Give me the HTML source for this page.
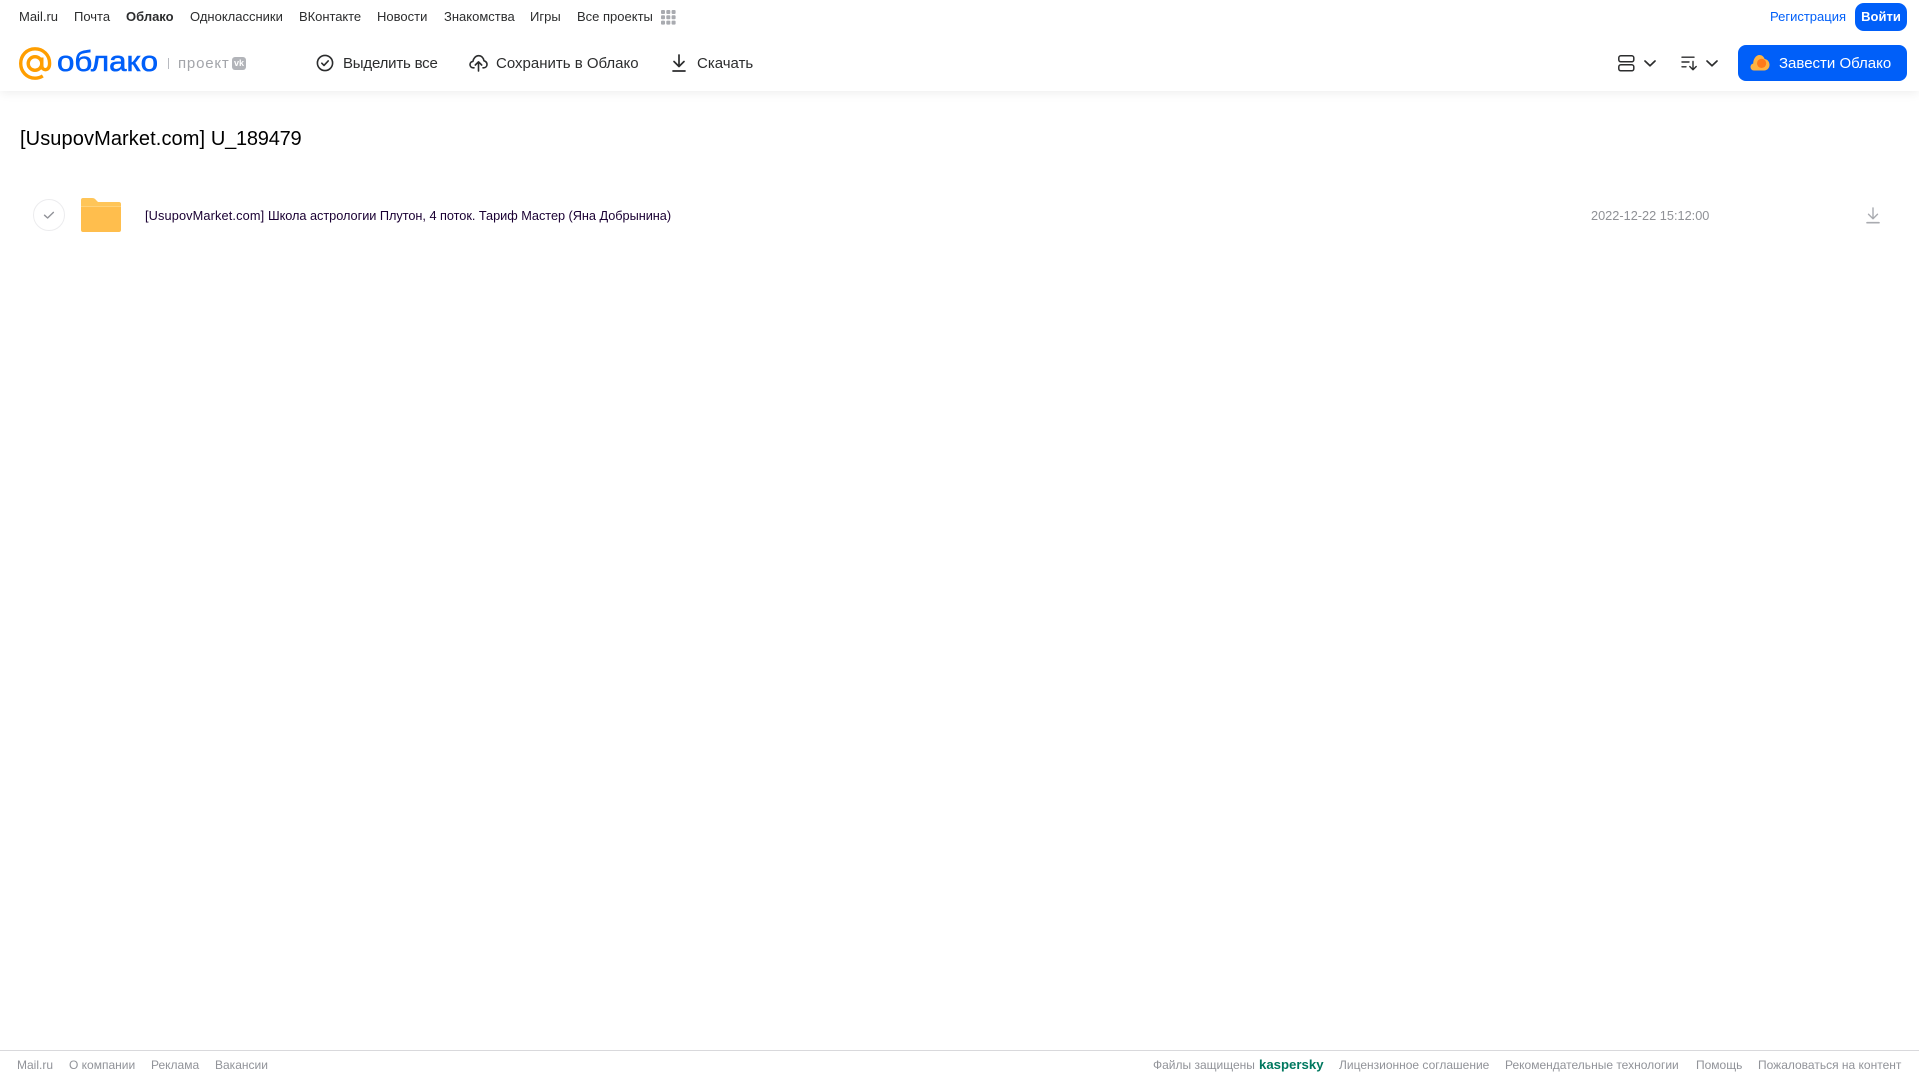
<!DOCTYPE html>
<html lang="ru">
<head>
<meta charset="utf-8">
<title>Облако</title>
<style>
html,body{margin:0;padding:0;background:#fff}
body{position:relative;width:1919px;height:1079px;overflow:hidden;font-family:"Liberation Sans","Noto Sans CJK SC",sans-serif}
a,span,div.t,h1{position:absolute;white-space:nowrap;text-decoration:none;margin:0;font-weight:400}
em{font-style:normal}
svg{position:absolute;overflow:visible}
.nav{top:8px;font-size:13px;line-height:17px;color:#2c2d2e}
.tool{top:55px;font-size:15px;line-height:18px;color:#2c2d2e}
.foot{top:1057px;font-size:12px;line-height:16px;color:#919399}
#hdr{position:absolute;left:0;top:0;width:1919px;height:91px;background:#fff;box-shadow:0 2px 10px rgba(0,0,0,.07)}
</style>
</head>
<body>
<div id="hdr"></div>

<a class="nav" style="left:19px">Mail.ru</a>
<a class="nav" style="left:74px">Почта</a>
<a class="nav" style="left:126px;font-weight:700">Облако</a>
<a class="nav" style="left:190px">Одноклассники</a>
<a class="nav" style="left:299px;letter-spacing:-.05px">ВКонтакте</a>
<a class="nav" style="left:377px">Новости</a>
<a class="nav" style="left:444px">Знакомства</a>
<a class="nav" style="left:530px">Игры</a>
<a class="nav" style="left:577px">Все проекты</a>
<svg style="left:661px;top:10px" width="15" height="15" viewBox="0 0 15 15" fill="#a9abb0">
<rect x="0" y="0" width="4" height="4" rx="1"/><rect x="5.3" y="0" width="4" height="4" rx="1"/><rect x="10.6" y="0" width="4" height="4" rx="1"/>
<rect x="0" y="5.3" width="4" height="4" rx="1"/><rect x="5.3" y="5.3" width="4" height="4" rx="1"/><rect x="10.6" y="5.3" width="4" height="4" rx="1"/>
<rect x="0" y="10.6" width="4" height="4" rx="1"/><rect x="5.3" y="10.6" width="4" height="4" rx="1"/><rect x="10.6" y="10.6" width="4" height="4" rx="1"/>
</svg>

<a class="nav" style="left:1770px;color:#005ff9">Регистрация</a>
<a style="left:1855px;top:3px;width:52px;height:28px;border-radius:9px;background:#005ff9;color:#fff;font-size:13px;font-weight:700;line-height:28px;text-align:center">Войти</a>

<!-- logo -->
<svg style="left:19px;top:47px" width="33" height="33" viewBox="0 0 33 33" fill="none" stroke="#ff9e00" stroke-width="3.4">
<circle cx="16" cy="16.5" r="6.8"/>
<path d="M22.8 10.5V18.6C22.8 21.6 25 23 27 22.6C29.6 22 30.6 19.5 30.6 16.2C30.6 8 24.2 1.8 16 1.8C7.8 1.8 1.7 8.3 1.7 16.5C1.7 24.7 8 31.2 16 31.2C19.2 31.2 21.6 30.3 23.8 28.9"/>
</svg>
<svg style="left:57px;top:46px" width="104" height="32"><text x="0" y="25" font-family="Liberation Sans" font-weight="400" font-size="29" fill="#005ff9" stroke="#005ff9" stroke-width=".6" textLength="101" lengthAdjust="spacingAndGlyphs">облако</text></svg>
<div class="t" style="left:168px;top:58px;width:1px;height:11px;background:#b8bac0"></div>
<span style="left:178px;top:55px;font-size:15px;line-height:18px;color:#a3a5aa;letter-spacing:.8px">проект</span>
<div class="t" style="left:232px;top:57px;width:14px;height:13px;border-radius:3px;background:#b2b4b9"></div>
<span style="left:232px;top:57px;width:14px;height:13px;line-height:13px;font-size:9px;font-weight:700;color:#fff;text-align:center">vk</span>

<!-- toolbar -->
<svg style="left:316px;top:54px" width="18" height="18" viewBox="0 0 18 18" fill="none" stroke="#2c2d2e" stroke-width="1.6" stroke-linecap="round" stroke-linejoin="round"><circle cx="9" cy="9" r="7.6"/><path d="M5.8 9.2L8 11.4L12.2 6.9"/></svg>
<a class="tool" style="left:343px;letter-spacing:-.2px">Выделить все</a>
<svg style="left:469px;top:54px" width="19" height="18" viewBox="0 0 19 18" fill="none" stroke="#2c2d2e" stroke-width="1.6" stroke-linecap="round" stroke-linejoin="round"><path d="M5 13.8H4.4C2.4 13.8 1 12.4 1 10.6C1 8.9 2.2 7.6 3.9 7.4C4.4 4.3 6.6 1.7 9.6 1.7C12.5 1.7 14.6 3.9 15 6.8C16.8 7.3 18 8.7 18 10.5C18 12.4 16.6 13.8 14.6 13.8H14"/><path d="M9.5 17V8.2M6.3 11L9.5 7.8L12.7 11"/></svg>
<a class="tool" style="left:496px">Сохранить в Облако</a>
<svg style="left:671px;top:54px" width="16" height="18" viewBox="0 0 16 18" fill="none" stroke="#2c2d2e" stroke-width="1.7" stroke-linecap="round" stroke-linejoin="round"><path d="M8 1V12M3 7.5L8 12.5L13 7.5M2 17H14"/></svg>
<a class="tool" style="left:697px">Скачать</a>

<!-- right controls -->
<svg style="left:1618px;top:55px" width="17" height="17" viewBox="0 0 17 17" fill="none" stroke="#2c2d2e" stroke-width="1.5"><rect x=".8" y=".8" width="15" height="6" rx="2"/><rect x=".8" y="9.8" width="15" height="6" rx="2"/></svg>
<svg style="left:1644px;top:60px" width="12" height="7" viewBox="0 0 12 7" fill="none" stroke="#2c2d2e" stroke-width="1.7" stroke-linecap="round" stroke-linejoin="round"><path d="M1 1L6 5.8L11 1"/></svg>
<svg style="left:1681px;top:56px" width="17" height="15" viewBox="0 0 17 15" fill="none" stroke="#2c2d2e" stroke-width="1.4" stroke-linecap="round" stroke-linejoin="round"><path d="M1 1.2H13M1 6H8M1 10.8H5M12 5.5V13.5M8.8 10.5L12 13.7L15.2 10.5"/></svg>
<svg style="left:1706px;top:60px" width="12" height="7" viewBox="0 0 12 7" fill="none" stroke="#2c2d2e" stroke-width="1.7" stroke-linecap="round" stroke-linejoin="round"><path d="M1 1L6 5.8L11 1"/></svg>

<a style="left:1738px;top:45px;width:169px;height:36px;border-radius:8px;background:#005ff9"></a>
<svg style="left:1750px;top:54px" width="20" height="17" viewBox="0 0 20 17"><path fill="#ffb340" d="M4 16.5C1.8 16.5 .5 14.8 .5 13C.5 11.2 1.6 9.9 3.2 9.5C3.2 5 6 1 9.4 1C12 1 13.8 2.7 14.6 5C17.4 5.3 19.5 7.8 19.5 10.8C19.5 14.2 17.2 16.5 14.2 16.5Z"/><circle cx="11.6" cy="9.4" r="4.6" fill="#ff7a1a"/></svg>
<span style="left:1779px;top:55px;font-size:15px;line-height:18px;color:#fff">Завести Облако</span>

<!-- content -->
<h1 style="left:20px;top:127px;font-size:20px;line-height:24px;color:#000"><em style="letter-spacing:.1px">[UsupovMarket.com] </em><em style="letter-spacing:-.22px">U_189479</em></h1>

<svg style="left:33px;top:199px" width="32" height="32" viewBox="0 0 32 32" fill="#fff"><circle cx="16" cy="16" r="15.5" stroke="#ececee"/><path d="M11.5 16.2L14.6 19L20.4 13.4" fill="none" stroke="#919399" stroke-width="1.4" stroke-linecap="round" stroke-linejoin="round"/></svg>
<svg style="left:81px;top:198px" width="40" height="34" viewBox="0 0 40 34"><path fill="#ffc558" d="M2 0H11C13 0 14 .8 15 2L17 4H38C39.2 4 40 4.8 40 6V9H0V2C0 .8 .8 0 2 0Z"/><path fill="#ffbe4d" d="M0 8H40V32C40 33.2 39.2 34 38 34H2C.8 34 0 33.2 0 32Z"/><path fill="#ffd27a" d="M0 8H40V9H0Z"/></svg>
<a style="left:145px;top:208px;font-size:12.75px;line-height:16px;color:#1a0033"><em style="letter-spacing:.13px">[UsupovMarket.com] </em><em style="letter-spacing:-.04px">Школа астрологии Плутон, 4 поток. Тариф Мастер (Яна Добрынина)</em></a>
<span style="left:1591px;top:208px;font-size:12.75px;line-height:16px;color:#8f9196">2022-12-22 15:12:00</span>
<svg style="left:1866px;top:207px" width="14" height="17" viewBox="0 0 14 17" fill="none" stroke="#a9abb0" stroke-width="1.4" stroke-linecap="round" stroke-linejoin="round"><path d="M7 1V11.5M2.5 7.2L7 11.7L11.5 7.2"/><path d="M1 15.7H13" stroke-width="1.6"/></svg>

<!-- footer -->
<div class="t" style="left:0;top:1050px;width:1919px;height:1px;background:#d9d9dc"></div>
<a class="foot" style="left:17px">Mail.ru</a>
<a class="foot" style="left:69px">О компании</a>
<a class="foot" style="left:151px">Реклама</a>
<a class="foot" style="left:215px">Вакансии</a>
<span class="foot" style="left:1153px">Файлы защищены</span>
<span class="foot" style="left:1259px;color:#00785f;font-weight:700;font-size:13.2px">kaspersky</span>
<a class="foot" style="left:1339px">Лицензионное соглашение</a>
<a class="foot" style="left:1505px">Рекомендательные технологии</a>
<a class="foot" style="left:1696px">Помощь</a>
<a class="foot" style="left:1758px">Пожаловаться на контент</a>
</body>
</html>
